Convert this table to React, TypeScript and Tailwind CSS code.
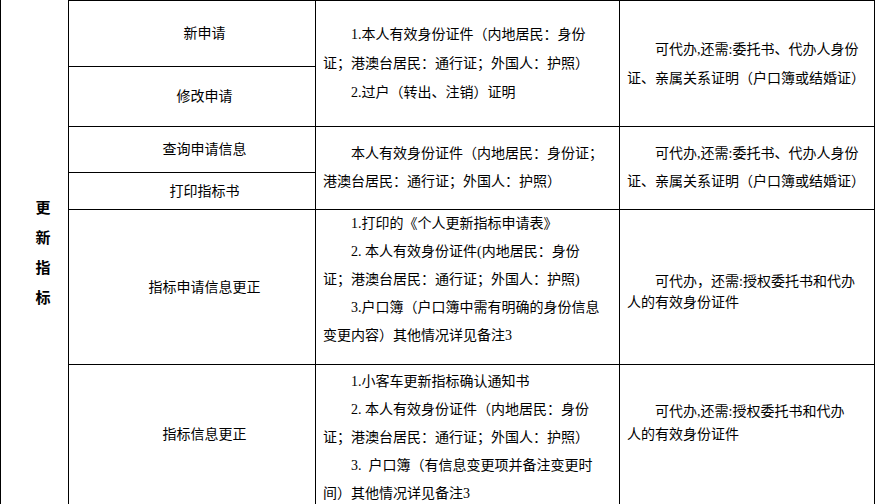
//region imports
import type { ReactNode } from "react";
//endregion

//region helpers
// serif Latin glyphs for the digits and half-width marks, CJK from Noto
const font = "font-['Liberation_Serif','Noto_Sans_CJK_SC','Noto_Sans_CJK_JP',sans-serif]";

/** One printed line; `indent` marks the first line of a paragraph */
const Line = ({ children, indent = false }: { children: ReactNode; indent?: boolean }) => (
  <div className={`whitespace-nowrap ${indent ? "pl-[28px]" : ""}`}>{children}</div>
);
//endregion

//region component
export default function App() {
  return (
    <div className={`min-h-screen bg-white text-black text-[14px] ${font}`}>
      <div className="grid w-[875px] grid-cols-[68px_247px_304px_255px] grid-rows-[67px_60px_46px_37px_155px_140px] border-l border-black">
        {/* category column, its top edge lies above the crop */}
        <div className="col-start-1 row-start-1 row-span-6 flex flex-col items-center justify-center border-r border-black pl-[17px] text-[15px] font-bold leading-[30px]">
          <span>更</span>
          <span>新</span>
          <span>指</span>
          <span>标</span>
        </div>

        {/* business items */}
        <div className="col-start-2 row-start-1 flex items-center justify-center border-t border-r border-b border-black pl-[25px]">
          新申请
        </div>
        <div className="col-start-2 row-start-2 flex items-center justify-center border-r border-b border-black pl-[25px]">
          修改申请
        </div>
        <div className="col-start-2 row-start-3 flex items-center justify-center border-r border-b border-black pl-[25px]">
          查询申请信息
        </div>
        <div className="col-start-2 row-start-4 flex items-center justify-center border-r border-b border-black pl-[25px]">
          打印指标书
        </div>
        <div className="col-start-2 row-start-5 flex items-center justify-center border-r border-b border-black pl-[25px]">
          指标申请信息更正
        </div>
        <div className="col-start-2 row-start-6 flex items-center justify-center border-r border-b border-black pl-[25px]">
          指标信息更正
        </div>

        {/* required documents */}
        <div className="col-start-3 row-start-1 row-span-2 flex flex-col justify-center border-t border-r border-b border-black pl-[7px] leading-[29px]">
          <Line indent>1.本人有效身份证件（内地居民：身份</Line>
          <Line>证；港澳台居民：通行证；外国人：护照）</Line>
          <Line indent>2.过户（转出、注销）证明</Line>
        </div>
        <div className="col-start-3 row-start-3 row-span-2 flex flex-col justify-center border-r border-b border-black pl-[7px] leading-[28px]">
          <Line indent>本人有效身份证件（内地居民：身份证；</Line>
          <Line>港澳台居民：通行证；外国人：护照）</Line>
        </div>
        <div className="col-start-3 row-start-5 flex flex-col border-r border-b border-black pl-[7px] leading-[28px]">
          <Line indent>1.打印的《个人更新指标申请表》</Line>
          <Line indent>2. 本人有效身份证件(内地居民：身份</Line>
          <Line>证；港澳台居民：通行证；外国人：护照)</Line>
          <Line indent>3.户口簿（户口簿中需有明确的身份信息</Line>
          <Line>变更内容）其他情况详见备注3</Line>
        </div>
        <div className="col-start-3 row-start-6 flex flex-col border-r border-b border-black pl-[7px] pt-[3px] leading-[28px]">
          <Line indent>1.小客车更新指标确认通知书</Line>
          <Line indent>2. 本人有效身份证件（内地居民：身份</Line>
          <Line>证；港澳台居民：通行证；外国人：护照）</Line>
          <Line indent>3.&nbsp; 户口簿（有信息变更项并备注变更时</Line>
          <Line>间）其他情况详见备注3</Line>
        </div>

        {/* proxy notes */}
        <div className="col-start-4 row-start-1 row-span-2 flex flex-col justify-center border-t border-r border-b border-black pl-[7px] leading-[29px]">
          <Line indent>可代办,还需:委托书、代办人身份</Line>
          <Line>证、亲属关系证明（户口簿或结婚证）</Line>
        </div>
        <div className="col-start-4 row-start-3 row-span-2 flex flex-col justify-center border-r border-b border-black pl-[7px] leading-[28px]">
          <Line indent>可代办,还需:委托书、代办人身份</Line>
          <Line>证、亲属关系证明（户口簿或结婚证）</Line>
        </div>
        <div className="col-start-4 row-start-5 flex flex-col border-r border-b border-black pl-[7px] pt-[61px] leading-[21px]">
          <Line indent>可代办，还需:授权委托书和代办</Line>
          <Line>人的有效身份证件</Line>
        </div>
        <div className="col-start-4 row-start-6 flex flex-col border-r border-b border-black pl-[7px] pt-[35px] leading-[23px]">
          <Line indent>可代办,还需:授权委托书和代办</Line>
          <Line>人的有效身份证件</Line>
        </div>
      </div>
    </div>
  );
}
//endregion
